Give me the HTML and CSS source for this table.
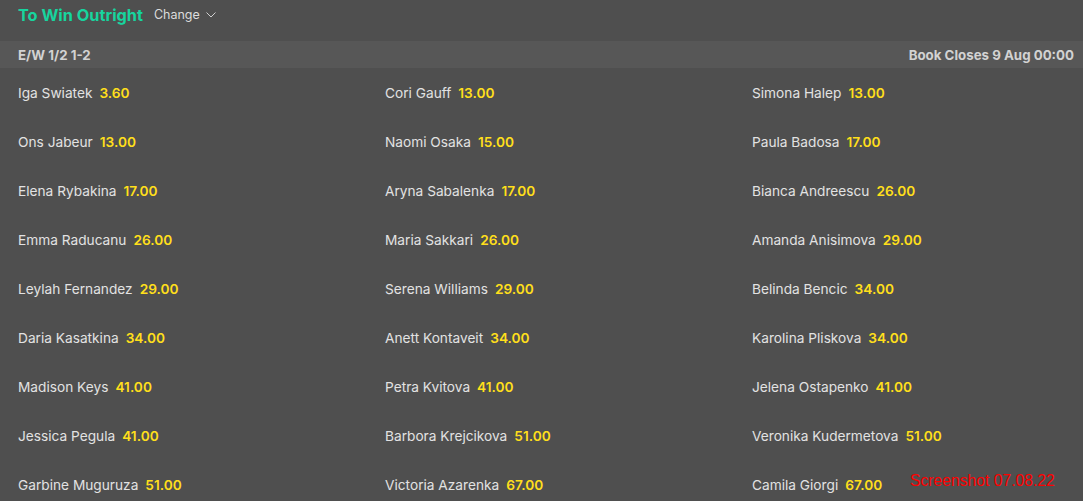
FILE: index.html
```html
<!DOCTYPE html>
<html>
<head>
<meta charset="utf-8">
<link rel="stylesheet" href="styles.css">
</head>
<body>
<div class="page">
  <div class="title-row">
    <h1 class="title">To Win Outright</h1>
    <span class="change">Change
      <svg class="chev" width="10" height="6" viewBox="0 0 10 6"><path d="M0.5 0.5 L5 5 L9.5 0.5" fill="none" stroke="#cfcfcf" stroke-width="1"/></svg>
    </span>
  </div>
  <div class="bar">
    <span>E/W 1/2 1-2</span>
    <span>Book Closes 9 Aug 00:00</span>
  </div>
  <div class="grid">
    <div class="cell"><span class="name">Iga Swiatek</span><span class="odds">3.60</span></div>
    <div class="cell"><span class="name">Cori Gauff</span><span class="odds">13.00</span></div>
    <div class="cell"><span class="name">Simona Halep</span><span class="odds">13.00</span></div>
    <div class="cell"><span class="name">Ons Jabeur</span><span class="odds">13.00</span></div>
    <div class="cell"><span class="name">Naomi Osaka</span><span class="odds">15.00</span></div>
    <div class="cell"><span class="name">Paula Badosa</span><span class="odds">17.00</span></div>
    <div class="cell"><span class="name">Elena Rybakina</span><span class="odds">17.00</span></div>
    <div class="cell"><span class="name">Aryna Sabalenka</span><span class="odds">17.00</span></div>
    <div class="cell"><span class="name">Bianca Andreescu</span><span class="odds">26.00</span></div>
    <div class="cell"><span class="name">Emma Raducanu</span><span class="odds">26.00</span></div>
    <div class="cell"><span class="name">Maria Sakkari</span><span class="odds">26.00</span></div>
    <div class="cell"><span class="name">Amanda Anisimova</span><span class="odds">29.00</span></div>
    <div class="cell"><span class="name">Leylah Fernandez</span><span class="odds">29.00</span></div>
    <div class="cell"><span class="name">Serena Williams</span><span class="odds">29.00</span></div>
    <div class="cell"><span class="name">Belinda Bencic</span><span class="odds">34.00</span></div>
    <div class="cell"><span class="name">Daria Kasatkina</span><span class="odds">34.00</span></div>
    <div class="cell"><span class="name">Anett Kontaveit</span><span class="odds">34.00</span></div>
    <div class="cell"><span class="name">Karolina Pliskova</span><span class="odds">34.00</span></div>
    <div class="cell"><span class="name">Madison Keys</span><span class="odds">41.00</span></div>
    <div class="cell"><span class="name">Petra Kvitova</span><span class="odds">41.00</span></div>
    <div class="cell"><span class="name">Jelena Ostapenko</span><span class="odds">41.00</span></div>
    <div class="cell"><span class="name">Jessica Pegula</span><span class="odds">41.00</span></div>
    <div class="cell"><span class="name">Barbora Krejcikova</span><span class="odds">51.00</span></div>
    <div class="cell"><span class="name">Veronika Kudermetova</span><span class="odds">51.00</span></div>
    <div class="cell"><span class="name">Garbine Muguruza</span><span class="odds">51.00</span></div>
    <div class="cell"><span class="name">Victoria Azarenka</span><span class="odds">67.00</span></div>
    <div class="cell"><span class="name">Camila Giorgi</span><span class="odds">67.00</span></div>
  </div>
  <div class="stamp">Screenshot 07.08.22</div>
</div>
</body>
</html>
```

FILE: styles.css
```css
html, body {
  margin: 0;
  padding: 0;
  background: #4f4f4f;
  overflow: hidden;
}
body {
  font-family: Inter, "Liberation Sans", Arial, sans-serif;
  width: 1083px;
  height: 501px;
}
.page {
  position: relative;
  height: 501px;
}
.title-row {
  display: flex;
  align-items: center;
  height: 29px;
  padding-left: 18px;
}
.title {
  margin: 0;
  font-size: 16.3px;
  font-weight: bold;
  color: #17d49e;
}
.change {
  margin-left: 11px;
  font-size: 12.5px;
  color: #dcdcdc;
  display: flex;
  align-items: center;
  gap: 6px;
}
.chev {
  display: block;
  margin-top: 1px;
}
.bar {
  margin-top: 12px;
  height: 27px;
  background: #575757;
  display: flex;
  justify-content: space-between;
  align-items: center;
  padding: 0 9px 0 18px;
  font-size: 13.3px;
  font-weight: bold;
  color: #d2d2d2;
}
.grid {
  display: grid;
  grid-template-columns: 367px 367px 1fr;
  padding-left: 18px;
}
.cell {
  height: 49px;
  display: flex;
  align-items: center;
  gap: 7px;
  font-size: 13.7px;
}
.name {
  color: #e2e2e2;
}
.odds {
  color: #ffdf1b;
  font-weight: 600;
}
.stamp {
  position: absolute;
  left: 910px;
  top: 472px;
  font-family: "Liberation Sans", Arial, sans-serif;
  font-size: 15.7px;
  color: #ff0000;
}
```
